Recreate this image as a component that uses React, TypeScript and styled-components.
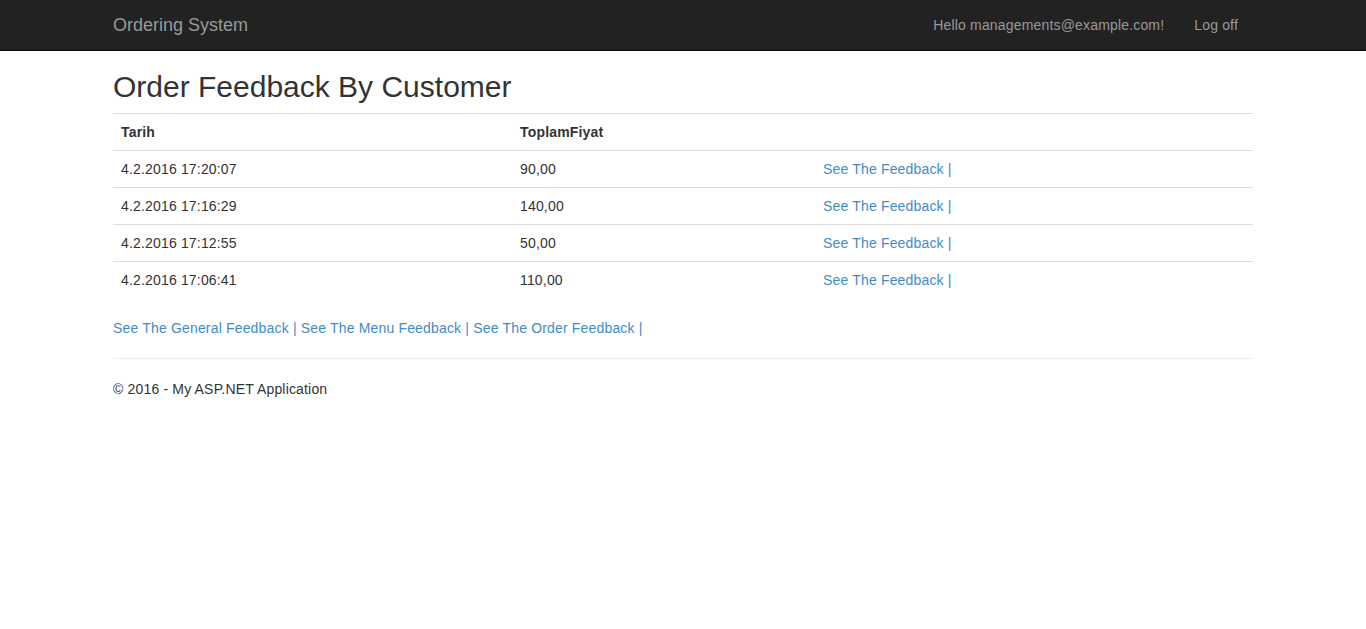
import React from "react";
import styled, { createGlobalStyle } from "styled-components";

const GlobalStyle = createGlobalStyle`
	* {
		box-sizing: border-box;
	}
	html, body {
		margin: 0;
		padding: 0;
		background: #fff;
	}
	body {
		padding-top: 50px;
		font-family: "Liberation Sans", Arial, Helvetica, sans-serif;
		font-size: 14px;
		line-height: 20px;
		letter-spacing: 0.17px;
		color: #333;
	}
`;

const orders = [
	{ date: "4.2.2016 17:20:07", total: "90,00" },
	{ date: "4.2.2016 17:16:29", total: "140,00" },
	{ date: "4.2.2016 17:12:55", total: "50,00" },
	{ date: "4.2.2016 17:06:41", total: "110,00" },
];

export default function App() {
	return (
		<>
			<GlobalStyle />
			<Navbar>
				<NavContainer>
					<Brand href="#">Ordering System</Brand>
					<NavRight>
						<NavLink href="#">Hello managements@example.com!</NavLink>
						<NavLink href="#">Log off</NavLink>
					</NavRight>
				</NavContainer>
			</Navbar>
			<Container>
				<Title>Order Feedback By Customer</Title>
				<Table>
					<colgroup>
						<col style={{ width: 399 }} />
						<col style={{ width: 303 }} />
						<col />
					</colgroup>
					<tbody>
						<tr>
							<Th>Tarih</Th>
							<Th>ToplamFiyat</Th>
							<Th></Th>
						</tr>
						{orders.map((o) => (
							<tr key={o.date}>
								<Td>{o.date}</Td>
								<Td>{o.total}</Td>
								<Td>
									<Link href="#">See The Feedback</Link> <Sep>|</Sep>
								</Td>
							</tr>
						))}
					</tbody>
				</Table>
				<Paragraph>
					<Link href="#">See The General Feedback</Link> <Sep>|</Sep>{" "}
					<Link href="#">See The Menu Feedback</Link> <Sep>|</Sep>{" "}
					<Link href="#">See The Order Feedback</Link> <Sep>|</Sep>
				</Paragraph>
				<Rule />
				<Footer>
					<Paragraph>© 2016 - My ASP.NET Application</Paragraph>
				</Footer>
			</Container>
		</>
	);
}

const Navbar = styled.nav`
	position: fixed;
	top: 0;
	left: 0;
	right: 0;
	height: 51px;
	background: #222;
	border-bottom: 1px solid #080808;
	z-index: 10;
`;

const NavContainer = styled.div`
	width: 1170px;
	margin: 0 auto;
	padding: 0 15px;
	display: flex;
	justify-content: space-between;
	align-items: stretch;
	height: 50px;
`;

const Brand = styled.a`
	display: block;
	height: 50px;
	padding: 15px 15px;
	margin-left: -15px;
	font-size: 18px;
	line-height: 20px;
	letter-spacing: 0;
	color: #999;
	text-decoration: none;
`;

const NavRight = styled.div`
	display: flex;
`;

const NavLink = styled.a`
	display: block;
	padding: 15px 15px;
	line-height: 20px;
	color: #999;
	text-decoration: none;
`;

const Container = styled.div`
	width: 1170px;
	margin: 0 auto;
	padding: 0 15px;
`;

const Title = styled.h2`
	margin: 20px 0 10px;
	font-size: 30px;
	font-weight: 500;
	line-height: 33px;
	letter-spacing: 0;
	color: #333;
`;

const Table = styled.table`
	width: 100%;
	border-collapse: collapse;
	border-spacing: 0;
	margin-bottom: 20px;
`;

const Th = styled.th`
	padding: 8px;
	line-height: 20px;
	text-align: left;
	font-weight: bold;
	border-top: 1px solid #ddd;
`;

const Td = styled.td`
	padding: 8px;
	line-height: 20px;
	border-top: 1px solid #ddd;
`;

const Link = styled.a`
	color: #428bca;
	text-decoration: none;
`;

const Sep = styled.span`
	color: #428bca;
`;

const Paragraph = styled.p`
	margin: 0 0 10px;
`;

const Rule = styled.hr`
	margin: 20px 0;
	border: 0;
	border-top: 1px solid #eee;
`;

const Footer = styled.footer``;
